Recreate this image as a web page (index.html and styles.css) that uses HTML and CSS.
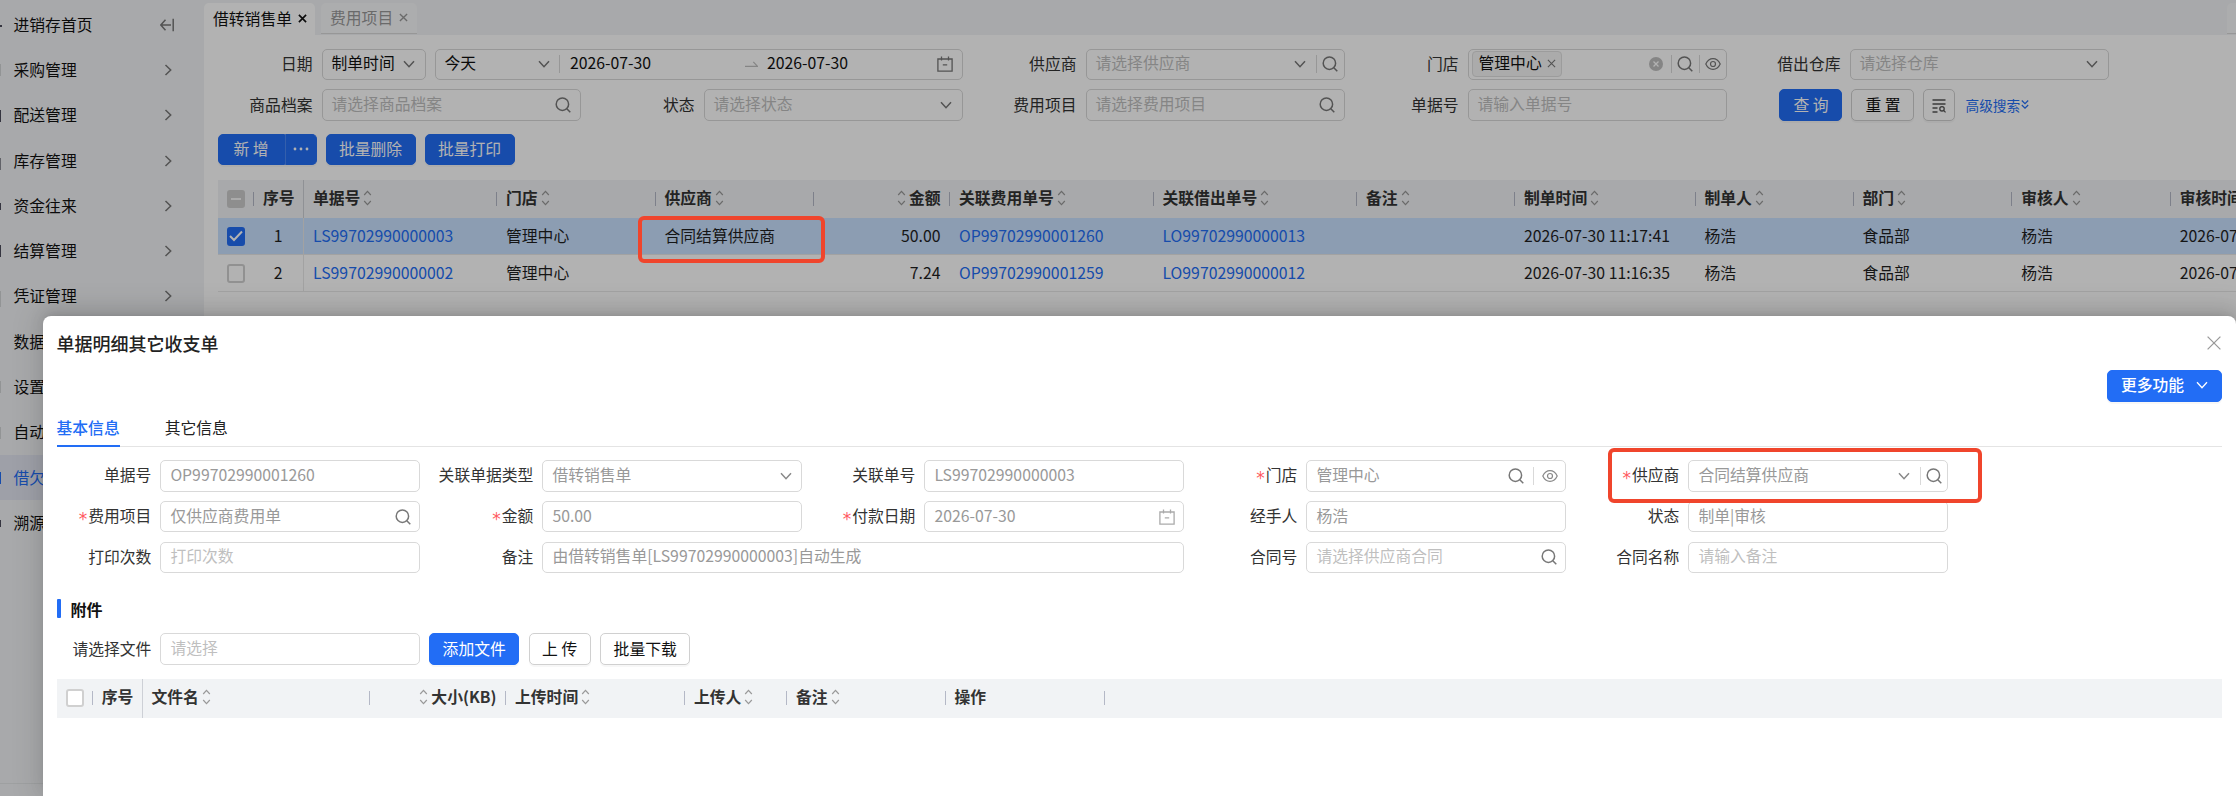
FILE: index.html
```html
<!DOCTYPE html>
<html lang="zh-CN">
<head>
<meta charset="utf-8">
<title>借转销售单</title>
<link rel="stylesheet" href="styles.css">
</head>
<body>
<svg class="defs" aria-hidden="true">
  <symbol id="down" viewBox="0 0 12 12"><path d="M1 3.3 6 8.7 11 3.3"/></symbol>
  <symbol id="right" viewBox="0 0 12 12"><path d="M3.5 1 8.7 6 3.5 11"/></symbol>
  <symbol id="search" viewBox="0 0 16 16"><circle cx="7.4" cy="7.2" r="6.2"/><path d="M11.8 11.8 15.3 15.3"/></symbol>
  <symbol id="eye" viewBox="0 0 16 14"><path d="M.8 7C2.4 3.5 5 1.7 8 1.7S13.600 3.500 15.200 7C13.600 10.500 11 12.300 8 12.300S2.400 10.500.8 7Z"/><circle cx="8" cy="7" r="2.500"/></symbol>
  <symbol id="cal" viewBox="0 0 16 16"><path d="M.9 3h14.200v12.200H.9ZM4.500.500V4.500M11.500.500V4.500M5.800 8.800h4.400"/></symbol>
  <symbol id="cross" viewBox="0 0 10 10"><path d="M1 1 9 9M9 1 1 9"/></symbol>
  <symbol id="sort" viewBox="0 0 8 16"><path d="M.7 5 4 1.400 7.300 5M.7 11 4 14.600 7.300 11"/></symbol>
</svg>

<div class="app">
  <nav class="side">
    <div class="item"><i class="mark m1"></i>进销存首页<svg class="ic fold" viewBox="0 0 14 14"><path d="M.8 7H11M5.500 1.800.8 7l4.700 5.200M13.200.8v12.400"/></svg></div>
    <div class="item"><i class="mark m2"></i>采购管理<svg class="ic arrow"><use href="#right"/></svg></div>
    <div class="item"><i class="mark m3"></i>配送管理<svg class="ic arrow"><use href="#right"/></svg></div>
    <div class="item"><i class="mark m4"></i>库存管理<svg class="ic arrow"><use href="#right"/></svg></div>
    <div class="item"><i class="mark m5"></i>资金往来<svg class="ic arrow"><use href="#right"/></svg></div>
    <div class="item"><i class="mark m3"></i>结算管理<svg class="ic arrow"><use href="#right"/></svg></div>
    <div class="item"><i class="mark m6"></i>凭证管理<svg class="ic arrow"><use href="#right"/></svg></div>
    <div class="item">数据</div>
    <div class="item"><i class="mark m2"></i>设置</div>
    <div class="item"><i class="mark m2"></i>自动</div>
    <div class="item on"><i class="mark m7"></i>借欠</div>
    <div class="item"><i class="mark m5"></i>溯源</div>
    <div class="side-foot"></div>
  </nav>

  <main class="main">
    <div class="tabs">
      <div class="tab cur">借转销售单<svg class="ic x"><use href="#cross"/></svg></div>
      <div class="tab">费用项目<svg class="ic x"><use href="#cross"/></svg></div>
      <div class="tab-more"></div>
    </div>

    <section class="panel">
      <div class="filters">
        <div class="field wide">
          <label>日期</label>
          <div class="box short"><span>制单时间</span><svg class="ic dn"><use href="#down"/></svg></div>
          <div class="box range">
            <div class="preset"><span>今天</span><svg class="ic dn"><use href="#down"/></svg></div>
            <i class="bar"></i>
            <span class="from">2026-07-30</span>
            <svg class="ic to" viewBox="0 0 13 6"><path d="M0 5.300H12.500L8.300.8"/></svg>
            <span>2026-07-30</span>
            <svg class="ic cal"><use href="#cal"/></svg>
          </div>
        </div>
        <div class="field"><label>供应商</label><div class="box"><span class="ph">请选择供应商</span><svg class="ic dn"><use href="#down"/></svg><i class="bar b2"></i><svg class="ic mag near"><use href="#search"/></svg></div></div>
        <div class="field"><label>门店</label><div class="box tagged"><span class="tag">管理中心<svg class="ic tx"><use href="#cross"/></svg></span><svg class="clear" viewBox="0 0 14 14"><circle cx="7" cy="7" r="7"/><path d="M4.500 4.500 9.500 9.500M9.500 4.500 4.500 9.500"/></svg><i class="bar b3"></i><svg class="ic mag near"><use href="#search"/></svg><i class="bar b4"></i><svg class="ic eye"><use href="#eye"/></svg></div></div>
        <div class="field"><label>借出仓库</label><div class="box"><span class="ph">请选择仓库</span><svg class="ic dn"><use href="#down"/></svg></div></div>

        <div class="field"><label>商品档案</label><div class="box"><span class="ph">请选择商品档案</span><svg class="ic mag"><use href="#search"/></svg></div></div>
        <div class="field"><label>状态</label><div class="box"><span class="ph">请选择状态</span><svg class="ic dn"><use href="#down"/></svg></div></div>
        <div class="field"><label>费用项目</label><div class="box"><span class="ph">请选择费用项目</span><svg class="ic mag"><use href="#search"/></svg></div></div>
        <div class="field"><label>单据号</label><div class="box"><span class="ph">请输入单据号</span></div></div>
        <div class="actions">
          <button class="btn pri w64">查 询</button>
          <button class="btn w64">重 置</button>
          <button class="btn sq"><svg class="ic" viewBox="0 0 14 14"><path d="M.5 1h13M.5 5h13M.5 9H5.500M.5 13H5.500"/><circle cx="10" cy="9.800" r="2.200"/><path d="m11.600 11.400 2 2"/></svg></button>
          <a class="adv">高级搜索<svg class="ic" viewBox="0 0 8 10"><path d="M.8 1 4 4.200 7.200 1M.8 5.500 4 8.700 7.200 5.500"/></svg></a>
        </div>
      </div>

      <div class="toolbar">
        <div class="split"><button class="btn pri">新 增</button><button class="btn pri"><svg class="dots" viewBox="0 0 16 4"><circle cx="2" cy="2" r="1.400"/><circle cx="8" cy="2" r="1.400"/><circle cx="14" cy="2" r="1.400"/></svg></button></div>
        <button class="btn pri">批量删除</button>
        <button class="btn pri">批量打印</button>
      </div>

      <div class="grid list">
        <div class="tr th">
          <div class="c ck"><i class="cb half"></i></div><div class="c no">序号</div>
          <div class="c">单据号<svg class="ic so"><use href="#sort"/></svg></div>
          <div class="c">门店<svg class="ic so"><use href="#sort"/></svg></div>
          <div class="c">供应商<svg class="ic so"><use href="#sort"/></svg></div>
          <div class="c num"><svg class="ic so"><use href="#sort"/></svg>金额</div>
          <div class="c">关联费用单号<svg class="ic so"><use href="#sort"/></svg></div>
          <div class="c">关联借出单号<svg class="ic so"><use href="#sort"/></svg></div>
          <div class="c">备注<svg class="ic so"><use href="#sort"/></svg></div>
          <div class="c">制单时间<svg class="ic so"><use href="#sort"/></svg></div>
          <div class="c">制单人<svg class="ic so"><use href="#sort"/></svg></div>
          <div class="c">部门<svg class="ic so"><use href="#sort"/></svg></div>
          <div class="c">审核人<svg class="ic so"><use href="#sort"/></svg></div>
          <div class="c">审核时间</div>
        </div>
        <div class="tr sel">
          <div class="c ck"><i class="cb full"><svg class="ic" viewBox="0 0 14 12"><path d="M1 6 5 10 13 1.500"/></svg></i></div><div class="c no">1</div>
          <div class="c"><a>LS99702990000003</a></div><div class="c">管理中心</div><div class="c">合同结算供应商</div><div class="c num">50.00</div>
          <div class="c"><a>OP99702990001260</a></div><div class="c"><a>LO99702990000013</a></div><div class="c"></div><div class="c">2026-07-30 11:17:41</div>
          <div class="c">杨浩</div><div class="c">食品部</div><div class="c">杨浩</div><div class="c">2026-07-30 11:17:41</div>
        </div>
        <div class="tr">
          <div class="c ck"><i class="cb"></i></div><div class="c no">2</div>
          <div class="c"><a>LS99702990000002</a></div><div class="c">管理中心</div><div class="c"></div><div class="c num">7.24</div>
          <div class="c"><a>OP99702990001259</a></div><div class="c"><a>LO99702990000012</a></div><div class="c"></div><div class="c">2026-07-30 11:16:35</div>
          <div class="c">杨浩</div><div class="c">食品部</div><div class="c">杨浩</div><div class="c">2026-07-30 11:16:35</div>
        </div>
      </div>
    </section>
  </main>
</div>

<div class="mask"></div>

<section class="drawer">
  <header class="d-head"><h1>单据明细其它收支单</h1><svg class="ic close"><use href="#cross"/></svg></header>
  <div class="d-more"><button class="btn pri">更多功能<svg class="ic"><use href="#down"/></svg></button></div>
  <div class="d-tabs"><span class="cur">基本信息</span><span>其它信息</span></div>

  <div class="form">
    <div class="field"><label>单据号</label><div class="box"><span>OP99702990001260</span></div></div>
    <div class="field"><label>关联单据类型</label><div class="box"><span>借转销售单</span><svg class="ic dn"><use href="#down"/></svg></div></div>
    <div class="field"><label>关联单号</label><div class="box"><span>LS99702990000003</span></div></div>
    <div class="field"><label><em>*</em>门店</label><div class="box"><span>管理中心</span><svg class="ic mag"><use href="#search"/></svg><i class="bar b5"></i><svg class="ic eye"><use href="#eye"/></svg></div></div>
    <div class="field"><label><em>*</em>供应商</label><div class="box"><span>合同结算供应商</span><svg class="ic dn"><use href="#down"/></svg><i class="bar b2"></i><svg class="ic mag near"><use href="#search"/></svg></div></div>

    <div class="field"><label><em>*</em>费用项目</label><div class="box"><span>仅供应商费用单</span><svg class="ic mag"><use href="#search"/></svg></div></div>
    <div class="field"><label><em>*</em>金额</label><div class="box"><span>50.00</span></div></div>
    <div class="field"><label><em>*</em>付款日期</label><div class="box"><span>2026-07-30</span><svg class="ic cal"><use href="#cal"/></svg></div></div>
    <div class="field"><label>经手人</label><div class="box"><span>杨浩</span></div></div>
    <div class="field"><label>状态</label><div class="box"><span>制单|审核</span></div></div>

    <div class="field"><label>打印次数</label><div class="box"><span class="ph">打印次数</span></div></div>
    <div class="field two"><label>备注</label><div class="box"><span>由借转销售单[LS99702990000003]自动生成</span></div></div>
    <div class="field"><label>合同号</label><div class="box"><span class="ph">请选择供应商合同</span><svg class="ic mag"><use href="#search"/></svg></div></div>
    <div class="field"><label>合同名称</label><div class="box"><span class="ph">请输入备注</span></div></div>
  </div>

  <h2 class="sect">附件</h2>
  <div class="upload">
    <div class="field"><label>请选择文件</label><div class="box"><span class="ph">请选择</span></div></div>
    <button class="btn pri">添加文件</button>
    <button class="btn">上 传</button>
    <button class="btn">批量下载</button>
  </div>

  <div class="grid files">
    <div class="tr th">
      <div class="c ck"><i class="cb"></i></div><div class="c no">序号</div>
      <div class="c">文件名<svg class="ic so"><use href="#sort"/></svg></div>
      <div class="c num"><svg class="ic so"><use href="#sort"/></svg>大小(KB)</div>
      <div class="c">上传时间<svg class="ic so"><use href="#sort"/></svg></div>
      <div class="c">上传人<svg class="ic so"><use href="#sort"/></svg></div>
      <div class="c">备注<svg class="ic so"><use href="#sort"/></svg></div>
      <div class="c">操作</div>
    </div>
  </div>
</section>

<div class="hl hl-row"></div>
<div class="hl hl-field"></div>
</body>
</html>
```

FILE: styles.css
```css
* { box-sizing: border-box; }
html, body { margin: 0; height: 100%; overflow: hidden; }
body {
  font: 15.800px/24px "Noto Sans CJK SC", sans-serif;
  color: #1f1f1f;
  background: #f1f3f5;
}
.defs { position: absolute; width: 0; height: 0; }
.ic { fill: none; stroke: #777; stroke-width: 1.5; flex: none; display: block; }
button { font: inherit; margin: 0; }
a { color: #226df5; }

.app { display: flex; height: 796px; }

/* sidebar */
.side { width: 204px; flex: none; display: flex; flex-direction: column; padding-top: 2px; color: #111; }
.item { height: 45.3px; padding: 0 30px 0 13.500px; display: flex; align-items: center; position: relative; flex: none; }
.item.on { background: #e2e5f1; color: #226df5; }
.arrow { width: 12px; height: 12px; margin-left: auto; }
.fold { width: 14px; height: 14px; margin-left: auto; }
.side-foot { margin-top: auto; height: 13px; border-top: 1px solid #e3e5e7; }
.mark { position: absolute; left: 0; top: 17px; width: 1px; height: 12px; background: #4c4c5c; }
.m1 { top: 23px; width: 2px; height: 2px; }
.m2 { background: #d2d4d6; }
.m4 { background: #8c8d96; top: 20px; }
.m5 { top: 20px; height: 7px; }
.m6 { background: #d2d4d6; height: 16px; }
.m7 { background: #226df5; }

/* tabs */
.main { flex: 1; min-width: 0; display: flex; flex-direction: column; }
.tabs { display: flex; height: 35px; padding-top: 3px; gap: 6px; flex: none; }
.tab {
  height: 31px; width: 96px; padding: 0 0 1px 9px; display: flex; align-items: center; gap: 6px;
  color: #999; background: #f7f8f9; border-radius: 5px 5px 0 0; border-bottom: 1px solid #d8d8d8;
}
.tab.cur { width: 111px; height: 32px; color: #111; background: #fff; border: 0; }
.x { width: 9px; height: 9px; stroke: #999; }
.cur .x { stroke: #111; stroke-width: 1.800; }
.tab-more { margin-left: auto; width: 9px; height: 31px; background: #f7f8f9; border-radius: 5px 0 0 0; border-bottom: 1px solid #d8d8d8; }

.panel { flex: 1; background: #fff; padding: 13.500px 0 0 0; overflow: hidden; }

/* fields */
.filters { display: grid; grid-template-columns: 376.800px repeat(4, 382px); row-gap: 9.300px; }
.field { display: flex; align-items: center; justify-content: flex-end; }
.field.wide { grid-column: span 2; }
.field label { margin-right: 9px; padding-bottom: 1px; white-space: nowrap; color: #333; }
.field em { font: 17px/10px "DejaVu Sans", sans-serif; color: #ff5a5f; vertical-align: -3px; margin-right: 1px; }
.box {
  width: 259.300px; height: 31.500px; border: 1px solid #d9d9d9; border-radius: 5px;
  display: flex; align-items: center; padding: 0 9px; background: #fff; flex: none; color: #111; white-space: nowrap;
}
.box span { padding-bottom: 2px; }
.box > .ic, .clear { margin-left: auto; }
.ph { color: #bfbfbf; }
.dn { width: 12px; height: 12px; margin-right: 1px; }
.mag { width: 16px; height: 16px; }
.box > .mag.near { margin-left: 5px; margin-right: -3px; }
.eye { width: 16px; height: 14px; stroke-width: 1.200; }
.cal { width: 16px; height: 16px; stroke-width: 1.300; }
.bar { width: 1px; height: 18px; background: #d9d9d9; flex: none; }
.b2 { margin-left: 9px; }
.b3 { margin-left: 8px; }
.b4 { margin-left: 10px; }
.box.short { width: 104px; margin-right: 9px; }
.box.range { width: 528.300px; }
.preset { width: 114.500px; display: flex; justify-content: space-between; align-items: center; flex: none; }
.preset .dn { margin-right: 9px; }
.from { margin-left: 10px; width: 175px; }
.box > .to { width: 13px; height: 6px; margin: 0 9px 0 0; stroke: #bfbfbf; stroke-width: 1.200; }
.box.tagged { padding-left: 3px; padding-right: 5px; }
.box > .eye { margin-left: 5px; }
.tagged > .mag.near { margin-right: -4px; }
.tag { height: 26px; width: 90px; border: 1px solid #e0e0e0; background: #f5f5f5; border-radius: 4px; display: flex; align-items: center; padding-left: 6px; gap: 5px; }
.tx { width: 9px; height: 9px; stroke-width: 1.200; }
.clear { width: 14px; height: 14px; fill: #bfbfbf; stroke: #fff; stroke-width: 1.300; }
.clear circle { stroke: none; }

.actions { display: flex; align-items: center; padding-left: 52.700px; gap: 9px; }
.btn {
  height: 31.500px; border: 1px solid #d0d0d0; border-radius: 5px; background: #fff; color: #111; padding: 0 0 1px;
  white-space: nowrap; box-shadow: 0 2px 0 rgba(0,0,0,.03); display: flex; align-items: center; justify-content: center; line-height: 24px;
}
.btn.pri { background: #226df5; border-color: #226df5; color: #fff; }
.w64 { width: 63px; }
.sq { width: 32px; }
.sq .ic { width: 14px; height: 14px; stroke: #555; stroke-width: 1.300; margin-top: 3px; }
.adv { font-size: 13.700px; display: flex; align-items: center; gap: 1px; margin-left: 1px; padding-bottom: 1px; }
.adv .ic { width: 8px; height: 11px; stroke: #226df5; stroke-width: 1.200; }

.toolbar { display: flex; gap: 9px; padding: 13.200px 0 14.300px 13.500px; }
.toolbar > .btn { width: 90px; }
.split { display: flex; }
.split .btn { width: 67px; border-radius: 5px 0 0 5px; }
.split .btn + .btn { width: 32px; border-radius: 0 5px 5px 0; border-left-color: #4b88f7; }
.dots { width: 16px; height: 4px; fill: #fff; display: block; }

/* tables */
.grid { white-space: nowrap; overflow: hidden; }
.list { margin-left: 13.500px; }
.tr { display: grid; height: 37px; border-bottom: 1px solid #e8e8e8; }
.list .tr { grid-template-columns: 36px 50.500px 193px 158.500px 158.500px 136px 203.500px 203.500px 158px 180.500px 158px 158.700px 158.500px 200px; width: 2200px; }
.tr.th { height: 38.700px; background: #f1f3f5; font-weight: 700; border: 0; color: #333; }
.c { display: flex; align-items: center; padding: 0 9.500px 1px 9px; position: relative; color: inherit; }
.th .c { border: 0; padding-bottom: 2px; }
.th .c:not(.no)::after { content: ""; position: absolute; right: 0; top: 12px; height: 14px; width: 1px; background: #b4b8c6; }
.list .th .c:last-child::after { display: none; }
.c.no { justify-content: center; padding: 0 0 1px; border-right: 1px solid #e8e8e8; }
.th .c.no { border-right: 1px solid #cdd0d6; padding: 0 0 2px 1px; }
.c.num { justify-content: flex-end; }
.c.ck, .th .c.ck { padding: 0 0 0 9px; }
.so { width: 9px; height: 16px; margin-left: 3px; stroke: #999; stroke-width: 1.200; }
.num .so { margin: 0 3px 0 0; }
.tr.sel { background: #c9e1ff; }
.cb { width: 18.500px; height: 18.500px; border: 2px solid #d0d0d0; border-radius: 3px; background: #fff; display: flex; align-items: center; justify-content: center; }
.cb.half { background: #ccc; border-color: #ccc; }
.cb.half::before { content: ""; width: 10px; height: 2px; background: #f5f5f5; }
.cb.full { background: #226df5; border-color: #226df5; }
.cb .ic { width: 14px; height: 12px; stroke: #fff; stroke-width: 2; }

.mask { position: absolute; inset: 0; background: rgba(0,0,0,.3); }

/* drawer */
.drawer {
  position: absolute; left: 43px; right: 0; top: 316px; bottom: 0; background: #fff; border-radius: 8px 8px 0 0; padding: 0 14px 0 13.500px;
  box-shadow: 0 -6px 16px rgba(0,0,0,.08), 0 -3px 6px -4px rgba(0,0,0,.12), 0 -2px 28px 8px rgba(0,0,0,.09);
}
.d-head { height: 54px; display: flex; align-items: center; justify-content: space-between; }
.d-head h1 { font-size: 18px; font-weight: 500; margin: 0; padding-bottom: 1px; color: #222; }
.close { width: 16px; height: 16px; stroke: #999; stroke-width: .8; }
.d-more { display: flex; justify-content: flex-end; }
.d-more .btn { width: 115px; gap: 12px; font-weight: 500; }
.d-more .ic { width: 12px; height: 12px; stroke: #fff; stroke-width: 1.300; }
.d-tabs { display: flex; gap: 45px; height: 35.500px; margin-top: 9.500px; border-bottom: 1px solid #e4e4e4; }
.d-tabs span { height: 36px; padding-top: 5px; color: #222; }
.d-tabs .cur { color: #226df5; border-bottom: 2px solid #226df5; font-weight: 500; }
.form { display: grid; grid-template-columns: 363.200px repeat(4, 382px); row-gap: 9.300px; margin-top: 13.500px; }
.drawer .box { color: #999; padding-right: 8px; }
.drawer .box .ph { color: #bfbfbf; }
.drawer .box .ic { stroke: #888; }
.drawer .box .mag { stroke: #777; }
.drawer .box .cal { stroke: #aaa; }
.b5 { margin-left: 9px; }
.drawer .box > .eye { margin-left: 8px; margin-right: -1px; }
.two { grid-column: span 2; }
.two .box { width: 641.300px; }
.sect { margin: 23.500px 0 0; font-size: 16px; font-weight: 700; color: #111; display: flex; align-items: center; gap: 9.500px; line-height: 24px; }
.sect::before { content: ""; width: 4.500px; height: 18.500px; background: #226df5; border-radius: 1px; }
.upload { display: flex; align-items: center; gap: 9.500px; margin-top: 12.800px; }
.upload .field { width: 363.200px; }
.upload .btn { width: 90px; }
.upload .btn:nth-of-type(2) { width: 62px; }
.files { margin-top: 14px; }
.files .tr { grid-template-columns: 36px 50px 227px 136.500px 179px 102px 158.500px 159px 1fr; }

/* highlight frames */
.hl { position: absolute; border: 4px solid #f0452c; border-radius: 6px; }
.hl-row { left: 638px; top: 216px; width: 187px; height: 47px; }
.hl-field { left: 1608px; top: 448px; width: 374px; height: 55px; }
```
